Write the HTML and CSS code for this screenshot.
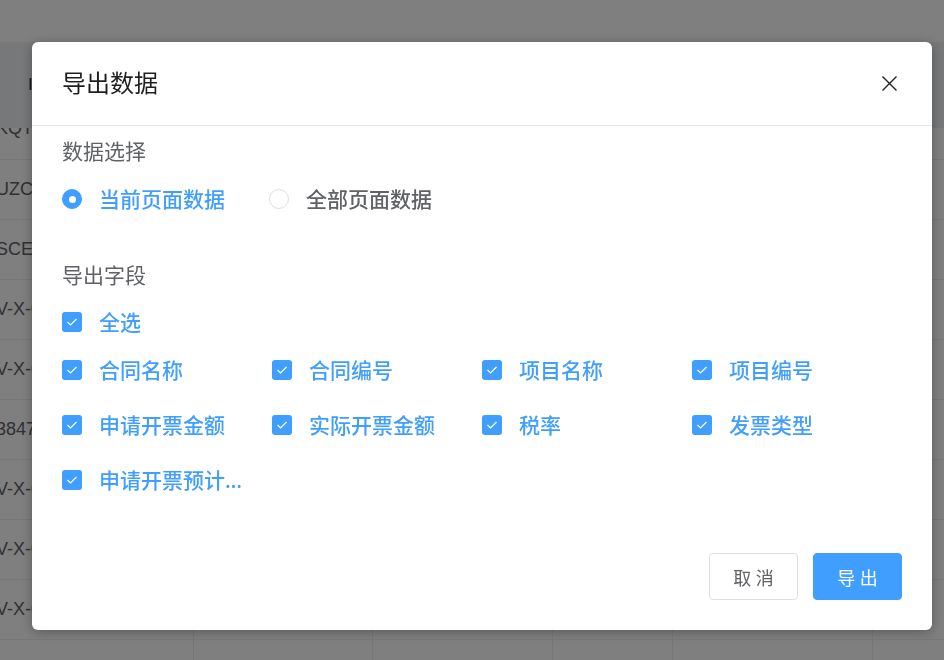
FILE: index.html
```html
<!DOCTYPE html>
<html lang="zh-CN">
  <head>
    <meta charset="UTF-8" />
    <title>导出数据</title>
    <link rel="stylesheet" href="styles.css">
  </head>
  <body>
    <!-- page behind the dialog -->
    <div class="page">
      <div class="topbar"></div>
      <div class="table">
        <div class="thead">
          <div class="cell c1"><span class="th-text">ID</span></div>
          <div class="cell c2"></div>
          <div class="cell c3"></div>
          <div class="cell c4"></div>
          <div class="cell c5"></div>
          <div class="cell c6"></div>
        </div>
        <div class="tbody">
          <div class="row first">
            <div class="cell c1"><span class="td-text">KQT-2023</span></div>
            <div class="cell c2"></div><div class="cell c3"></div><div class="cell c4"></div><div class="cell c5"></div><div class="cell c6"></div>
          </div>
          <div class="row">
            <div class="cell c1"><span class="td-text">UZC-1182</span></div>
            <div class="cell c2"></div><div class="cell c3"></div><div class="cell c4"></div><div class="cell c5"></div><div class="cell c6"></div>
          </div>
          <div class="row">
            <div class="cell c1"><span class="td-text">SCE-0931</span></div>
            <div class="cell c2"></div><div class="cell c3"></div><div class="cell c4"></div><div class="cell c5"></div><div class="cell c6"></div>
          </div>
          <div class="row">
            <div class="cell c1"><span class="td-text">V-X-0423</span></div>
            <div class="cell c2"></div><div class="cell c3"></div><div class="cell c4"></div><div class="cell c5"></div><div class="cell c6"></div>
          </div>
          <div class="row">
            <div class="cell c1"><span class="td-text">V-X-0424</span></div>
            <div class="cell c2"></div><div class="cell c3"></div><div class="cell c4"></div><div class="cell c5"></div><div class="cell c6"></div>
          </div>
          <div class="row">
            <div class="cell c1"><span class="td-text">38470215</span></div>
            <div class="cell c2"></div><div class="cell c3"></div><div class="cell c4"></div><div class="cell c5"></div><div class="cell c6"></div>
          </div>
          <div class="row">
            <div class="cell c1"><span class="td-text">V-X-0511</span></div>
            <div class="cell c2"></div><div class="cell c3"></div><div class="cell c4"></div><div class="cell c5"></div><div class="cell c6"></div>
          </div>
          <div class="row">
            <div class="cell c1"><span class="td-text">V-X-0512</span></div>
            <div class="cell c2"></div><div class="cell c3"></div><div class="cell c4"></div><div class="cell c5"></div><div class="cell c6"></div>
          </div>
          <div class="row">
            <div class="cell c1"><span class="td-text">V-X-0513</span></div>
            <div class="cell c2"></div><div class="cell c3"></div><div class="cell c4"></div><div class="cell c5"></div><div class="cell c6"></div>
          </div>
          <div class="row">
            <div class="cell c1"></div>
            <div class="cell c2"></div><div class="cell c3"></div><div class="cell c4"></div><div class="cell c5"></div><div class="cell c6"></div>
          </div>
        </div>
      </div>
    </div>

    <div class="mask"></div>

    <div class="dialog-wrapper">
      <div class="dialog">
        <div class="dialog-header">
          <span class="dialog-title">导出数据</span>
          <button class="dialog-close" aria-label="关闭">
            <svg width="15" height="15" viewBox="0 0 15 15">
              <path d="M0.5 0.5 L14.5 14.5 M14.5 0.5 L0.5 14.5" stroke="#1f1f1f" stroke-width="1.4" fill="none" />
            </svg>
          </button>
        </div>

        <div class="dialog-body">
          <div class="section-label">数据选择</div>
          <div class="radio-group">
            <label class="radio is-checked">
              <span class="radio-input"></span>
              <span class="radio-label">当前页面数据</span>
            </label>
            <label class="radio">
              <span class="radio-input"></span>
              <span class="radio-label">全部页面数据</span>
            </label>
          </div>

          <div class="section-label fields-label">导出字段</div>
          <div class="check-all">
            <label class="checkbox">
              <span class="checkbox-input"><svg width="12" height="10" viewBox="0 0 12 10"><polyline points="1.5,5 4.5,8 10.5,2" /></svg></span>
              <span class="checkbox-label">全选</span>
            </label>
          </div>
          <div class="check-grid">
            <label class="checkbox">
              <span class="checkbox-input"><svg width="12" height="10" viewBox="0 0 12 10"><polyline points="1.5,5 4.5,8 10.5,2" /></svg></span>
              <span class="checkbox-label">合同名称</span>
            </label>
            <label class="checkbox">
              <span class="checkbox-input"><svg width="12" height="10" viewBox="0 0 12 10"><polyline points="1.5,5 4.5,8 10.5,2" /></svg></span>
              <span class="checkbox-label">合同编号</span>
            </label>
            <label class="checkbox">
              <span class="checkbox-input"><svg width="12" height="10" viewBox="0 0 12 10"><polyline points="1.5,5 4.5,8 10.5,2" /></svg></span>
              <span class="checkbox-label">项目名称</span>
            </label>
            <label class="checkbox">
              <span class="checkbox-input"><svg width="12" height="10" viewBox="0 0 12 10"><polyline points="1.5,5 4.5,8 10.5,2" /></svg></span>
              <span class="checkbox-label">项目编号</span>
            </label>
            <label class="checkbox">
              <span class="checkbox-input"><svg width="12" height="10" viewBox="0 0 12 10"><polyline points="1.5,5 4.5,8 10.5,2" /></svg></span>
              <span class="checkbox-label">申请开票金额</span>
            </label>
            <label class="checkbox">
              <span class="checkbox-input"><svg width="12" height="10" viewBox="0 0 12 10"><polyline points="1.5,5 4.5,8 10.5,2" /></svg></span>
              <span class="checkbox-label">实际开票金额</span>
            </label>
            <label class="checkbox">
              <span class="checkbox-input"><svg width="12" height="10" viewBox="0 0 12 10"><polyline points="1.5,5 4.5,8 10.5,2" /></svg></span>
              <span class="checkbox-label">税率</span>
            </label>
            <label class="checkbox">
              <span class="checkbox-input"><svg width="12" height="10" viewBox="0 0 12 10"><polyline points="1.5,5 4.5,8 10.5,2" /></svg></span>
              <span class="checkbox-label">发票类型</span>
            </label>
            <label class="checkbox">
              <span class="checkbox-input"><svg width="12" height="10" viewBox="0 0 12 10"><polyline points="1.5,5 4.5,8 10.5,2" /></svg></span>
              <span class="checkbox-label">申请开票预计日期</span>
            </label>
          </div>
        </div>

        <div class="dialog-footer">
          <button class="btn btn-default">取 消</button>
          <button class="btn btn-primary">导 出</button>
        </div>
      </div>
    </div>
  </body>
</html>
```

FILE: styles.css
```css
html {
  box-sizing: border-box;
  margin: 0;
  padding: 0;
}
*, *::before, *::after {
  box-sizing: inherit;
}
body {
  margin: 0;
  padding: 0;
  width: 944px;
  height: 660px;
  overflow: hidden;
  background-color: #ffffff;
  font-family: "Noto Sans", "Noto Sans CJK SC", sans-serif;
}

/* page behind */
.page {
  width: 944px;
  height: 660px;
  overflow: hidden;
}
.topbar {
  height: 42px;
  background-color: #ffffff;
}
.table {
  font-family: "Liberation Sans", sans-serif;
  font-size: 17px;
  color: #606266;
}
.thead {
  display: flex;
  height: 86px;
  background-color: #eef0f3;
}
.thead .cell {
  display: flex;
  align-items: center;
}
.th-text {
  padding-left: 28px;
  color: #303133;
}
.tbody .row {
  display: flex;
  height: 60px;
  border-bottom: 1px solid #ebeef5;
}
.tbody .row.first {
  height: 32px;
  align-items: flex-end;
}
.tbody .cell {
  display: flex;
  align-items: center;
  height: 100%;
  border-right: 1px solid #ebeef5;
}
.tbody .row.first .cell {
  align-items: flex-start;
}
.tbody .row.first .td-text {
  margin-top: -10px;
}
.td-text {
  white-space: nowrap;
  text-indent: -4px;
  font-size: 18px;
}
.c1 { width: 194px; overflow: hidden; }
.c2 { width: 179px; }
.c3 { width: 180px; }
.c4 { width: 120px; }
.c5 { width: 200px; }
.c6 { flex: 1; border-right: none !important; }

.mask {
  position: fixed;
  top: 0;
  left: 0;
  right: 0;
  bottom: 0;
  background-color: rgba(0, 0, 0, 0.5);
}

/* dialog */
.dialog-wrapper {
  position: fixed;
  top: 0;
  left: 0;
  right: 0;
  bottom: 0;
}
.dialog {
  margin: 42px 0 0 32px;
  width: 900px;
  height: 588px;
  background-color: #ffffff;
  border-radius: 6px;
  box-shadow: 0 2px 12px rgba(0, 0, 0, 0.3);
  display: flex;
  flex-direction: column;
}
.dialog-header {
  height: 84px;
  padding: 0 35px 0 30px;
  display: flex;
  align-items: center;
  justify-content: space-between;
  border-bottom: 1px solid #e4e7ed;
}
.dialog-title {
  font-size: 24px;
  line-height: 30px;
  color: #1f1f1f;
  margin-top: -2px;
}
.dialog-close {
  border: none;
  background: none;
  padding: 0;
  width: 15px;
  height: 15px;
  display: flex;
  cursor: pointer;
}

.dialog-body {
  padding: 10px 30px 0 30px;
}
.section-label {
  font-size: 21px;
  line-height: 30px;
  color: #606266;
}
.fields-label {
  margin-top: 46px;
}

.radio-group {
  display: flex;
  margin-top: 18px;
  height: 30px;
  align-items: center;
}
.radio {
  display: flex;
  align-items: center;
  margin-right: 44px;
  cursor: pointer;
}
.radio-input {
  width: 20px;
  height: 20px;
  border-radius: 50%;
  border: 1px solid #dcdfe6;
  background-color: #ffffff;
  display: flex;
  align-items: center;
  justify-content: center;
}
.radio.is-checked .radio-input {
  border-color: #409eff;
  background-color: #409eff;
}
.radio.is-checked .radio-input::after {
  content: "";
  width: 7px;
  height: 7px;
  border-radius: 50%;
  background-color: #ffffff;
}
.radio-label {
  margin-left: 17px;
  font-size: 21px;
  line-height: 30px;
  font-weight: 500;
  color: #606266;
}
.radio.is-checked .radio-label {
  color: #409eff;
}

.check-all {
  margin-top: 17px;
}
.check-grid {
  margin-top: 18px;
  display: grid;
  grid-template-columns: repeat(4, 210px);
  row-gap: 25px;
}
.checkbox {
  display: flex;
  align-items: center;
  height: 30px;
  cursor: pointer;
}
.checkbox-input {
  width: 20px;
  height: 20px;
  flex-shrink: 0;
  border-radius: 3px;
  background-color: #409eff;
  display: flex;
  align-items: center;
  justify-content: center;
}
.checkbox-input polyline {
  fill: none;
  stroke: #ffffff;
  stroke-width: 1.2;
}
.checkbox-label {
  margin-left: 17px;
  font-size: 21px;
  line-height: 30px;
  font-weight: 500;
  color: #409eff;
  max-width: 146px;
  white-space: nowrap;
  overflow: hidden;
  text-overflow: ellipsis;
}

.dialog-footer {
  margin-top: auto;
  padding: 0 30px 30px 30px;
  display: flex;
  justify-content: flex-end;
  gap: 15px;
}
.btn {
  height: 47px;
  width: 89px;
  border-radius: 4px;
  font-family: "Noto Sans", "Noto Sans CJK SC", sans-serif;
  font-size: 18px;
  cursor: pointer;
}
.btn-default {
  background-color: #ffffff;
  border: 1px solid #dcdfe6;
  color: #606266;
}
.btn-primary {
  background-color: #409eff;
  border: 1px solid #409eff;
  color: #ffffff;
}
```
